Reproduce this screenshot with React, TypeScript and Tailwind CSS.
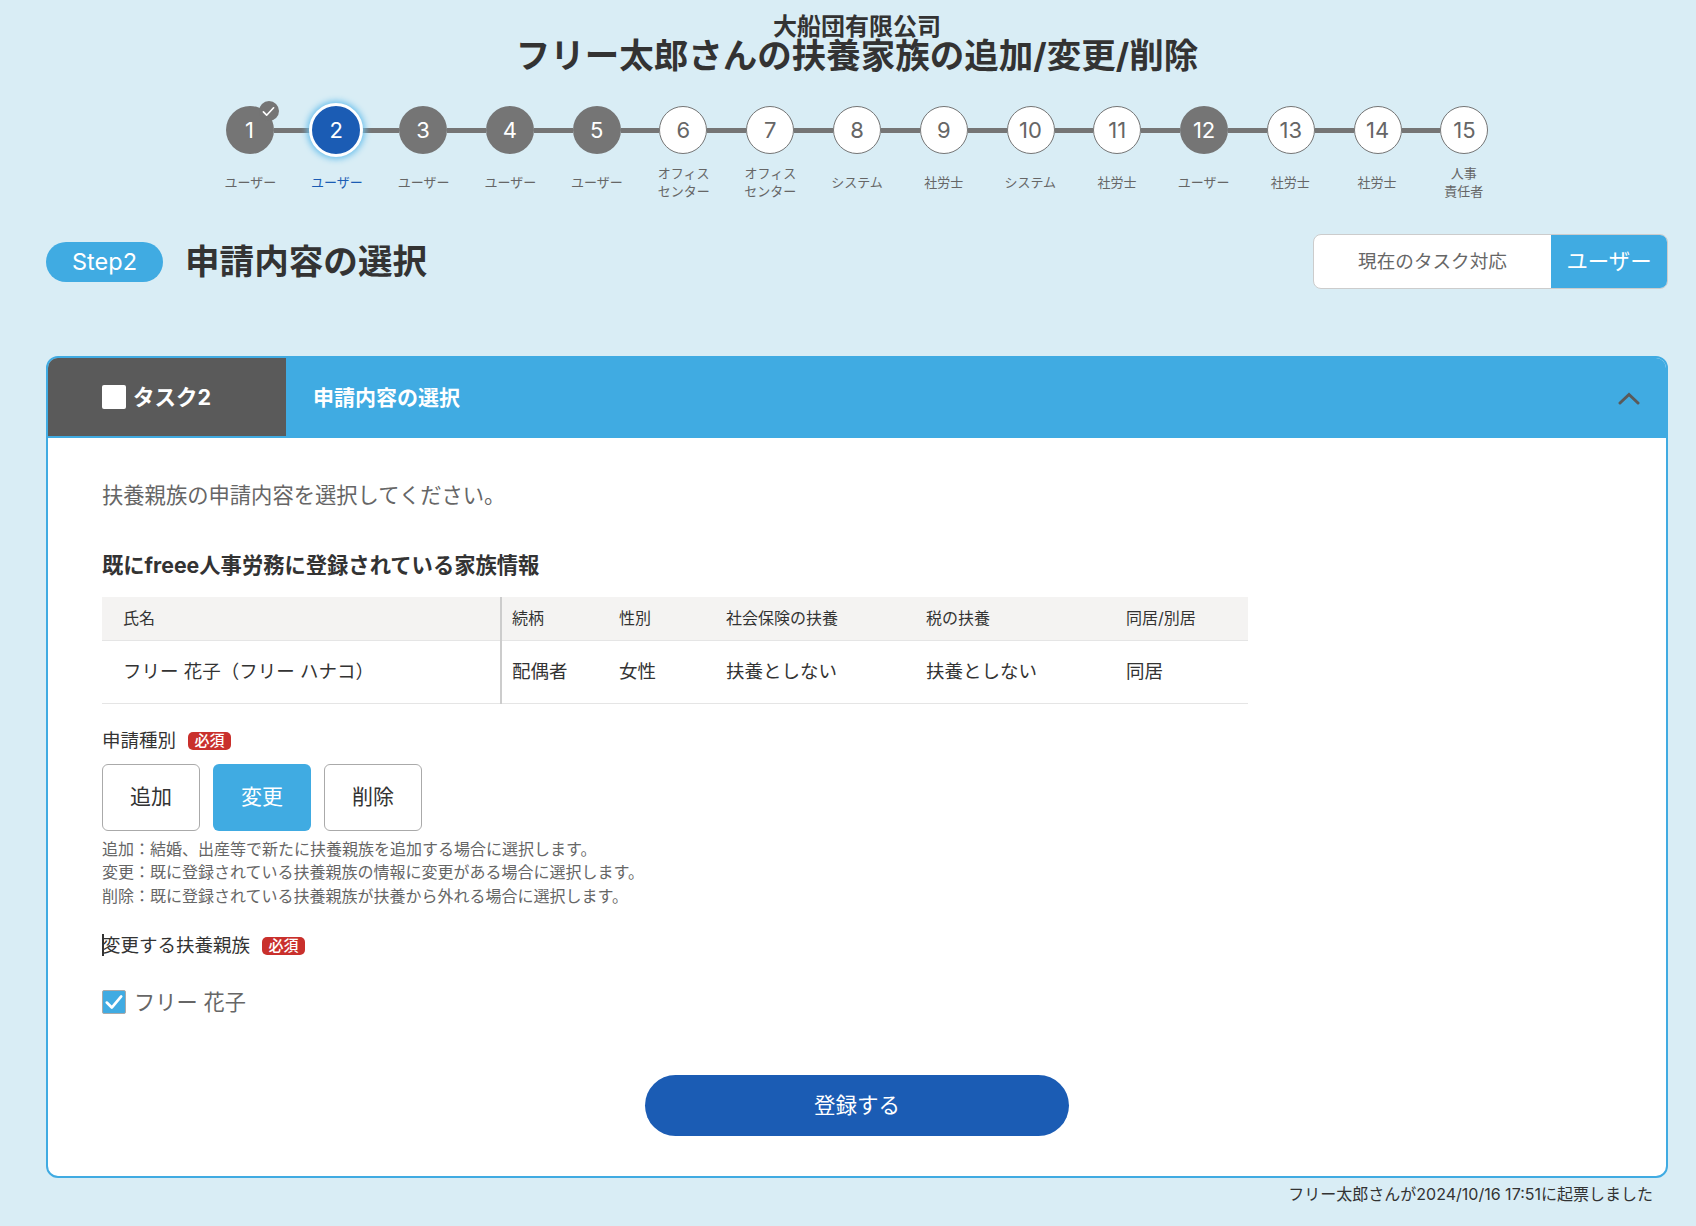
import React from "react";

const steps = [
  { n: 1, who: ["ユーザー"], done: true },
  { n: 2, who: ["ユーザー"], done: true, active: true },
  { n: 3, who: ["ユーザー"], done: true },
  { n: 4, who: ["ユーザー"], done: true },
  { n: 5, who: ["ユーザー"], done: true },
  { n: 6, who: ["オフィス", "センター"] },
  { n: 7, who: ["オフィス", "センター"] },
  { n: 8, who: ["システム"] },
  { n: 9, who: ["社労士"] },
  { n: 10, who: ["システム"] },
  { n: 11, who: ["社労士"] },
  { n: 12, who: ["ユーザー"], done: true },
  { n: 13, who: ["社労士"] },
  { n: 14, who: ["社労士"] },
  { n: 15, who: ["人事", "責任者"] },
];

const Circle = ({ n, done, active }: { n: number; done?: boolean; active?: boolean }) => {
  let cls = "h-12 w-12 bg-white border border-[#757575] text-[#666666]";
  if (done) cls = "h-12 w-12 bg-[#757575] text-white";
  if (active) cls = "-mx-[3px] h-[54px] w-[54px] bg-[#1b5cb4] text-white border-[3.5px] border-white shadow-[0_0_6px_2px_#6cc0ec]";
  return (
    <div className={`relative z-10 flex shrink-0 items-center justify-center rounded-full text-[22px] ${cls}`}>
      {n}
      {n === 1 && (
        <span className="absolute right-[-5px] top-[-5px] flex h-5 w-5 items-center justify-center rounded-full bg-[#757575]">
          <svg width="13" height="13" viewBox="0 0 14 14" fill="none" stroke="white" strokeWidth="1.8" strokeLinecap="round" strokeLinejoin="round">
            <path d="M1.5 7.5l3.5 3.5 7.5-8" />
          </svg>
        </span>
      )}
    </div>
  );
};

const Stepper = () => (
  <div className="mx-auto w-[1300px]">
    <div className="mx-[18.5px] flex h-12 items-center">
      {steps.map((s, i) => (
        <React.Fragment key={s.n}>
          <Circle n={s.n} done={s.done} active={s.active} />
          {i < steps.length - 1 && <div className="h-[5px] flex-1 bg-[#757575]" />}
        </React.Fragment>
      ))}
    </div>
    <div className="mt-[9px] grid grid-cols-15">
      {steps.map((s) => (
        <div
          key={s.n}
          className={`flex h-[38px] flex-col items-center justify-center text-[13px] leading-[18.5px] ${s.active ? "text-[#1b5cb4]" : "text-[#666666]"}`}
        >
          {s.who.map((w) => (
            <span key={w}>{w}</span>
          ))}
        </div>
      ))}
    </div>
  </div>
);

const Required = () => (
  <span className="ml-3 flex h-[18px] w-[43px] items-center justify-center rounded-[5px] bg-[#c9302c] text-[15px] font-medium leading-none text-white">
    必須
  </span>
);

const App = () => {
  return (
    <div
      className="min-h-[1226px] bg-[#d9edf5] pb-[20px] pl-[46px] pr-[28px] pt-3 text-[#333333]"
      style={{ fontFamily: 'Inter, "Noto Sans CJK JP", sans-serif' }}
    >
      <div className="text-center text-[24px] font-bold leading-[30px]">大船団有限公司</div>
      <h1 className="mt-[-6px] text-center text-[34.5px] font-bold leading-[40px]">フリー太郎さんの扶養家族の追加/変更/削除</h1>

      <div className="mt-[30px]">
        <Stepper />
      </div>

      <div className="mt-[33px] flex h-[55px] items-center justify-between">
        <div className="flex items-center">
          <span className="flex h-10 w-[117px] items-center justify-center rounded-full bg-[#40abe2] text-[23.5px] text-white">
            Step2
          </span>
          <h2 className="ml-[22px] text-[34.6px] font-bold leading-none">申請内容の選択</h2>
        </div>
        <div className="flex h-[55px] w-[355px] overflow-hidden rounded-lg border border-[#cccccc] bg-white">
          <div className="flex flex-1 items-center justify-center text-[18.6px] text-[#666666]">現在のタスク対応</div>
          <div className="flex w-[116px] items-center justify-center bg-[#40abe2] text-[21.4px] text-white">ユーザー</div>
        </div>
      </div>

      <div className="mt-[67px] overflow-hidden rounded-xl border-2 border-[#40abe2] bg-white">
        <div className="flex h-20 items-stretch bg-[#40abe2]">
          <div className="flex h-[78px] w-[238px] items-center bg-[#5a5a5a] pl-[54px]">
            <span className="h-6 w-6 rounded-[2px] bg-white" />
            <span className="ml-[7px] text-[21.5px] font-bold text-white">タスク2</span>
          </div>
          <div className="ml-[27px] flex flex-1 items-center text-[21px] font-bold text-white">申請内容の選択</div>
          <div className="mr-[26px] flex items-center">
            <svg width="22" height="13" viewBox="0 0 22 13" fill="none" stroke="#5a5a5a" strokeWidth="3" strokeLinecap="round">
              <path d="M2 11l9-8.5 9 8.5" />
            </svg>
          </div>
        </div>

        <div className="px-[54px] pb-[40px]">
          <p className="mt-[42px] text-[21.3px] leading-[30px] text-[#666666]">扶養親族の申請内容を選択してください。</p>
          <h3 className="mt-[40px] text-[21.3px] font-bold leading-[30px]">既にfreee人事労務に登録されている家族情報</h3>

          <table className="mt-[17px] w-[1146px] table-fixed border-collapse text-left">
            <colgroup>
              <col className="w-[399px]" />
              <col className="w-[118px]" />
              <col className="w-[107px]" />
              <col className="w-[200px]" />
              <col className="w-[200px]" />
              <col />
            </colgroup>
            <thead>
              <tr className="h-[43px] border-b border-[#e5e5e5] bg-[#f4f3f2] text-[16px]">
                <th className="pl-[21px] font-normal">氏名</th>
                <th className="border-l-2 border-[#cccccc] pl-[10px] font-normal">続柄</th>
                <th className="font-normal">性別</th>
                <th className="font-normal">社会保険の扶養</th>
                <th className="font-normal">税の扶養</th>
                <th className="font-normal">同居/別居</th>
              </tr>
            </thead>
            <tbody>
              <tr className="h-[63px] border-b border-[#e5e5e5] text-[18.5px]">
                <td className="pl-[21px]">フリー 花子（フリー ハナコ）</td>
                <td className="border-l-2 border-[#cccccc] pl-[10px]">配偶者</td>
                <td>女性</td>
                <td>扶養としない</td>
                <td>扶養としない</td>
                <td>同居</td>
              </tr>
            </tbody>
          </table>

          <div className="mt-[24px] flex h-[26px] items-center text-[18.5px]">
            申請種別
            <Required />
          </div>

          <div className="mt-[10px] flex gap-[13px]">
            <button className="h-[67px] w-[98px] rounded-md border border-[#aaaaaa] bg-white text-[21px]">追加</button>
            <button className="h-[67px] w-[98px] rounded-md bg-[#40abe2] text-[21px] text-white">変更</button>
            <button className="h-[67px] w-[98px] rounded-md border border-[#aaaaaa] bg-white text-[21px]">削除</button>
          </div>

          <div className="mt-[7px] h-[72px] text-[16px] leading-[23.7px] text-[#666666]">
            <p>追加：結婚、出産等で新たに扶養親族を追加する場合に選択します。</p>
            <p>変更：既に登録されている扶養親族の情報に変更がある場合に選択します。</p>
            <p>削除：既に登録されている扶養親族が扶養から外れる場合に選択します。</p>
          </div>

          <div className="relative mt-[23px] flex h-[26px] items-center text-[18.5px]">
            <span className="absolute left-0 top-[1px] h-[22px] w-[2px] bg-[#333333]" />
            変更する扶養親族
            <Required />
          </div>

          <label className="mt-[31px] flex items-center">
            <span className="flex h-6 w-6 items-center justify-center rounded-[2px] border border-[#aaaaaa] bg-[#40abe2]">
              <svg width="20" height="20" viewBox="0 0 18 18" fill="none" stroke="white" strokeWidth="2.4" strokeLinecap="round" strokeLinejoin="round">
                <path d="M2.5 9.5l4.5 4.5 8.5-10" />
              </svg>
            </span>
            <span className="ml-2 text-[21.2px] leading-6 text-[#666666]">フリー 花子</span>
          </label>

          <div className="mt-[61px] flex justify-center">
            <button className="h-[61px] w-[424px] rounded-full bg-[#1b5cb4] text-[21.5px] text-white">登録する</button>
          </div>
        </div>
      </div>

      <div className="mt-[5px] pr-[15px] text-right text-[16px] leading-[22px]">フリー太郎さんが2024/10/16 17:51に起票しました</div>
    </div>
  );
};

export default App;
